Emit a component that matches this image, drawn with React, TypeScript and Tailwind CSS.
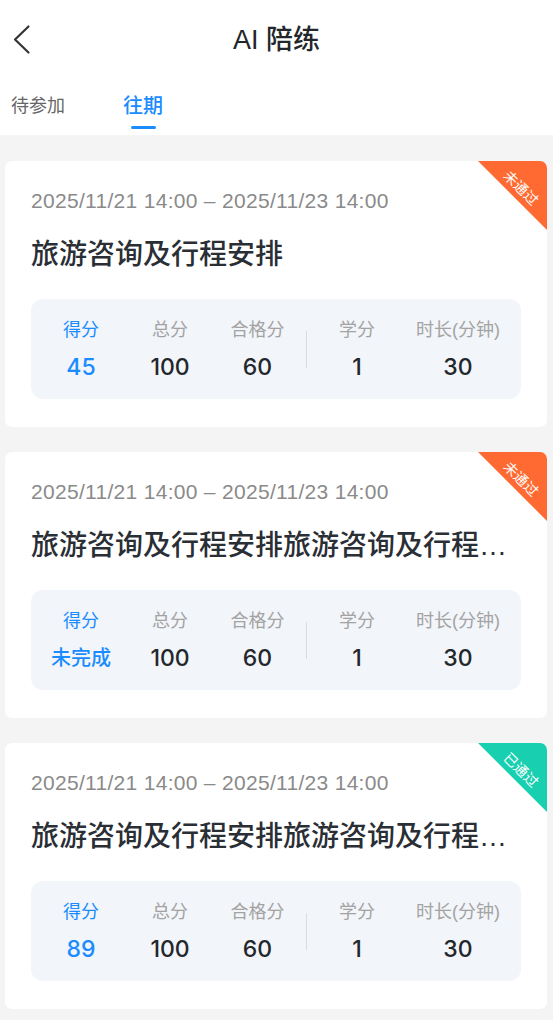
type Record = {
  id: number
  title: string
  score: string
  status: 'fail' | 'pass'
}

const RECORDS: Record[] = [
  { id: 1, title: '旅游咨询及行程安排', score: '45', status: 'fail' },
  {
    id: 2,
    title: '旅游咨询及行程安排旅游咨询及行程安排旅游咨询',
    score: '未完成',
    status: 'fail',
  },
  {
    id: 3,
    title: '旅游咨询及行程安排旅游咨询及行程安排旅游咨询',
    score: '89',
    status: 'pass',
  },
]

function Corner({ status }: { status: Record['status'] }) {
  const pass = status === 'pass'
  return (
    <div className="absolute top-0 right-0 w-[69px] h-[69px] overflow-hidden rounded-tr-[7px]">
      <div
        className={`absolute inset-0 [clip-path:polygon(0_0,100%_0,100%_100%)] ${
          pass ? 'bg-[#18cfb0]' : 'bg-[#ff6a33]'
        }`}
      />
      <span className="absolute left-[43px] top-[27px] -translate-x-1/2 -translate-y-1/2 rotate-45 whitespace-nowrap text-[14px] leading-none text-white">
        {pass ? '已通过' : '未通过'}
      </span>
    </div>
  )
}

function Stat({
  label,
  value,
  width,
  accent,
}: {
  label: string
  value: string
  width: string
  accent?: boolean
}) {
  const isText = value.length > 2 && accent
  return (
    <div className={`flex flex-col items-center ${width}`}>
      <span
        className={`text-[18px] leading-[24px] whitespace-nowrap ${
          accent ? 'text-[#1a8cff]' : 'text-[#a3a3a3]'
        }`}
      >
        {label}
      </span>
      <span
        className={`mt-[10px] leading-[30px] font-medium whitespace-nowrap ${
          accent ? 'text-[#1a8cff]' : 'text-[#23272c]'
        } ${
          isText
            ? 'text-[20px]'
            : "text-[23px] font-['Inter','Noto_Sans_CJK_SC',sans-serif]"
        }`}
      >
        {value}
      </span>
    </div>
  )
}

function RecordCard({ record }: { record: Record }) {
  return (
    <div className="relative bg-white rounded-[7px] h-[266px] pt-[28px] px-[26px]">
      <Corner status={record.status} />
      <div className="text-[21px] leading-[24px] tracking-[0.3px] text-[#8a8a8a]">
        2025/11/21 14:00 – 2025/11/23 14:00
      </div>
      <div className="mt-[24px] text-[28px] leading-[36px] font-medium text-[#2a2e35] truncate">
        {record.title}
      </div>
      <div className="mt-[26px] h-[100px] rounded-[12px] bg-[#f2f5f9] flex items-start pt-[19px]">
        <Stat label="得分" value={record.score} width="w-[100px]" accent />
        <Stat label="总分" value="100" width="w-[78px]" />
        <Stat label="合格分" value="60" width="w-[97px]" />
        <div className="self-center -mt-[19px] w-px h-[37px] bg-[#dcdcdc]" />
        <Stat label="学分" value="1" width="w-[100px]" />
        <Stat label="时长(分钟)" value="30" width="w-[102px]" />
      </div>
    </div>
  )
}

export default function App() {
  return (
    <div className="w-[553px] min-h-[1020px] bg-[#f4f4f4] font-['Liberation_Sans','Noto_Sans_CJK_SC',sans-serif]">
      <div className="bg-white">
        {/* header */}
        <div className="relative h-[80px] flex items-center justify-center">
          <svg
            className="absolute left-0 top-0"
            width="40"
            height="80"
            viewBox="0 0 40 80"
            fill="none"
          >
            <path
              d="M28.5 26.5 L15 39.5 L28.5 52.5"
              stroke="#333"
              strokeWidth="2.2"
              strokeLinecap="round"
              strokeLinejoin="round"
            />
          </svg>
          <h1 className="text-[27px] leading-[32px] font-medium text-[#23272c]">
            AI 陪练
          </h1>
        </div>
        {/* tabs */}
        <div className="h-[55px] flex items-start pt-[14px] pl-[11px]">
          <div className="text-[18px] leading-[24px] text-[#666]">待参加</div>
          <div className="ml-[58px] flex flex-col items-center">
            <div className="text-[20px] leading-[24px] font-medium text-[#1a8cff]">
              往期
            </div>
            <div className="mt-[8px] w-[25px] h-[3px] rounded-full bg-[#1a8cff]" />
          </div>
        </div>
      </div>

      <div className="pt-[26px] pl-[5px] pr-[6px] flex flex-col gap-[25px] pb-[13px]">
        {RECORDS.map((record) => (
          <RecordCard key={record.id} record={record} />
        ))}
      </div>
    </div>
  )
}
